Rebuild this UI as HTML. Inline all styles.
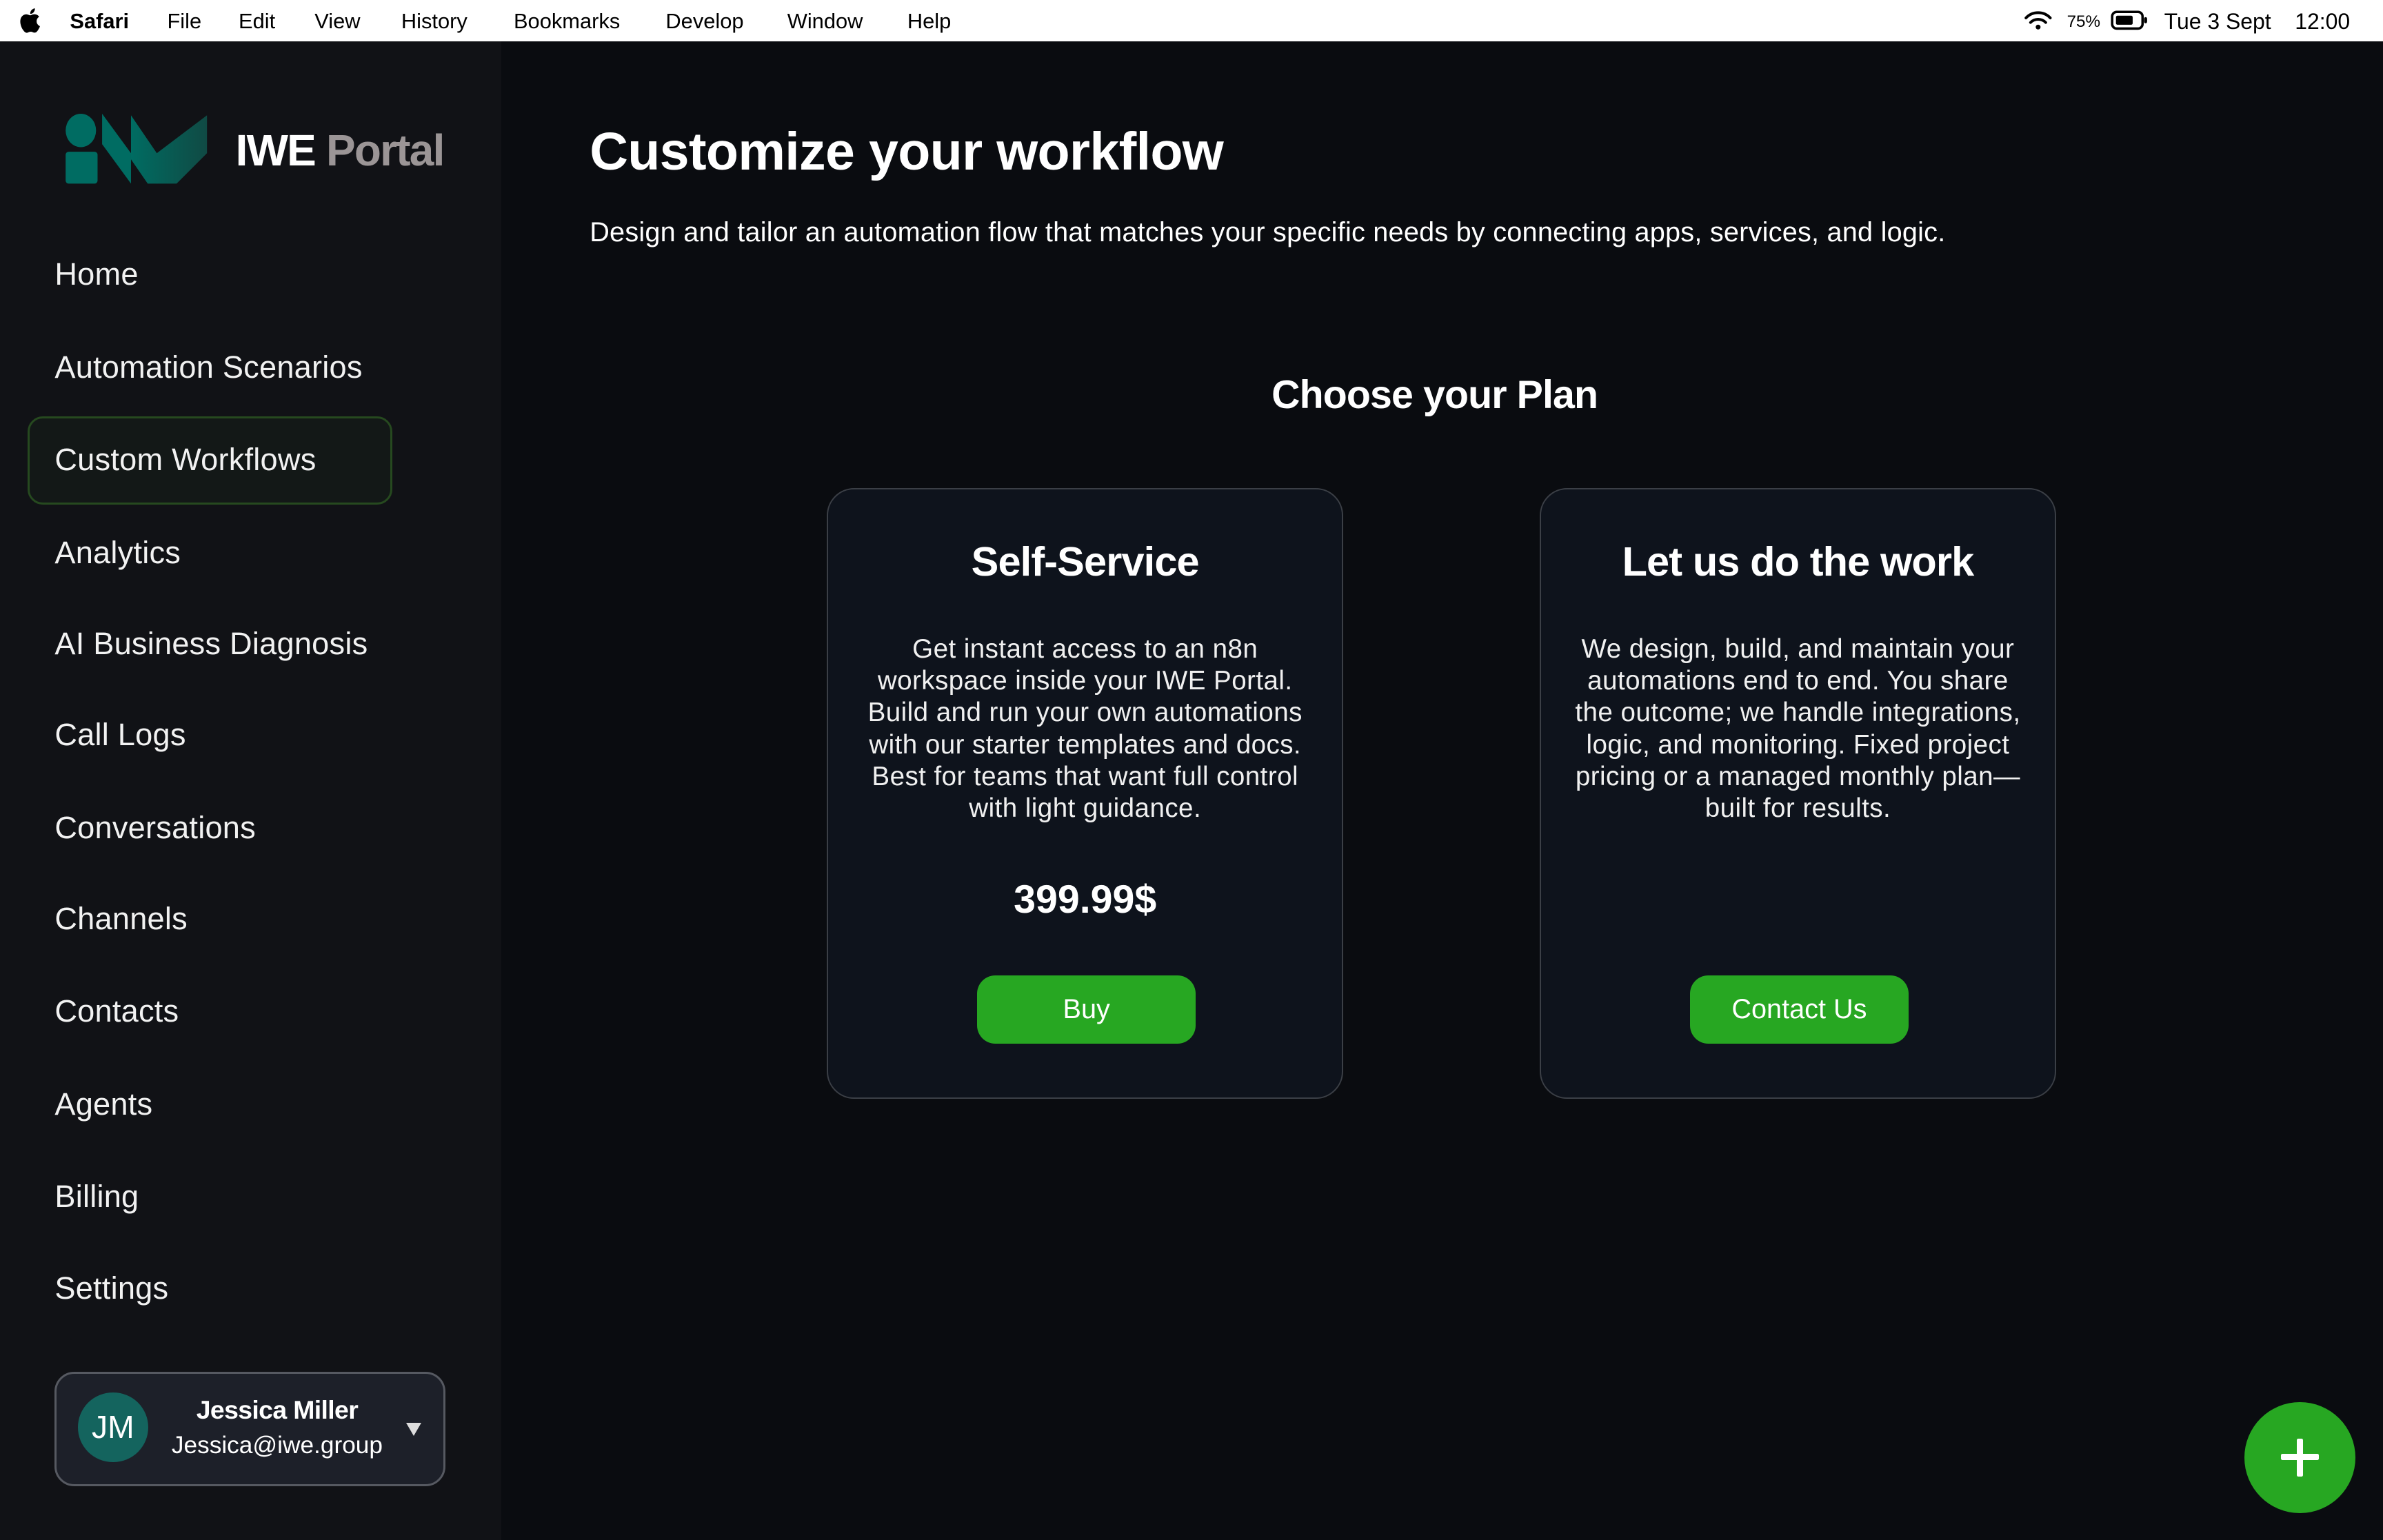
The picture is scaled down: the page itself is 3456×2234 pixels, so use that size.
<!DOCTYPE html>
<html><head><meta charset="utf-8"><style>
*{margin:0;padding:0;box-sizing:border-box}
html,body{width:3456px;height:2234px;overflow:hidden;background:#0a0c10}
#r{zoom:2.2041;width:1568px;height:1014px;position:relative;font-family:"Liberation Sans",sans-serif;color:#fff;background:#0a0c10}
.mb{position:absolute;left:0;top:0;width:1568px;height:27px;background:#fff;color:#000;font-size:14px}
.mb span{position:absolute;top:6px}
.sb{position:absolute;left:0;top:27px;width:330px;height:987px;background:#111216}
.nav{position:absolute;left:36px;font-size:20.5px;color:#f2f2f2;letter-spacing:0.1px}
.sel{position:absolute;left:18px;top:247px;width:240px;height:58px;border:1.5px solid #26491f;background:#131817;border-radius:10px}
.card{position:absolute;top:321px;width:340px;height:402px;background:#0e131c;border:1px solid #3b3f46;border-radius:18px;text-align:center}
.card h2{position:absolute;top:32px;width:100%;font-size:27px;font-weight:bold;letter-spacing:-0.4px}
.card p{position:absolute;top:95px;left:0;right:0;font-size:17.5px;line-height:21px;color:#f0f0f0;letter-spacing:0.2px;white-space:nowrap}
.btn{position:absolute;top:320px;height:45px;background:#27a722;border-radius:12px;font-size:18px;line-height:45px;text-align:center}
</style></head><body><div id="r">
<div class="mb">
<svg style="position:absolute;left:12px;top:5px" width="15" height="17" viewBox="0 0 15 17"><path d="M12.3 9c0-2 1.6-2.9 1.7-3-1-1.4-2.4-1.6-2.900-1.600-1.200-.1-2.400.7-3 .7s-1.600-.7-2.600-.7C4.100 4.400 2.900 5.200 2.200 6.400.8 8.900 1.900 12.600 3.300 14.600c.7 1 1.400 2 2.500 2 1 0 1.400-.7 2.600-.7s1.500.7 2.600.6c1.100 0 1.800-1 2.400-2 .8-1.100 1.100-2.200 1.100-2.300 0 0-2.200-.8-2.200-3.200zM10.400 3c.5-.7.900-1.600.8-2.500-.8 0-1.700.5-2.300 1.200-.5.600-.9 1.500-.8 2.400.9.1 1.800-.4 2.300-1.100z"/></svg>
<span style="left:46px;font-weight:bold">Safari</span><span style="left:110px">File</span><span style="left:157px">Edit</span><span style="left:207px">View</span><span style="left:264px">History</span><span style="left:338px">Bookmarks</span><span style="left:438px">Develop</span><span style="left:518px">Window</span><span style="left:597px">Help</span>
<svg style="position:absolute;left:1332px;top:7px" width="18" height="13" viewBox="0 0 18 13"><path d="M1 5a11 11 0 0 1 16 0M4 8a7 7 0 0 1 10 0" stroke="#000" stroke-width="1.8" fill="none" stroke-linecap="round"/><circle cx="9" cy="11" r="1.6"/></svg>
<span style="left:1360px;font-size:11px;top:8px">75%</span>
<svg style="position:absolute;left:1389px;top:7px" width="25" height="13" viewBox="0 0 25 13"><rect x="1" y="1" width="20" height="11" rx="3" stroke="#000" stroke-width="1.6" fill="none"/><rect x="3.5" y="3.5" width="11" height="6" rx="1"/><rect x="22" y="4.5" width="2" height="4" rx="1"/></svg>
<span style="left:1424px;font-size:14.5px">Tue 3 Sept</span><span style="left:1510px;font-size:14.5px">12:00</span>
</div>
<div class="sb">
<svg style="position:absolute;left:42px;top:48px" width="95" height="47" viewBox="0 0 95 47"><defs><linearGradient id="g" x1="0" x2="1"><stop offset="0" stop-color="#006c62"/><stop offset="1" stop-color="#104a44"/></linearGradient></defs><ellipse cx="11" cy="11" rx="10" ry="11" fill="#006c62"/><rect x="1" y="25" width="21" height="21" rx="2" fill="#006c62"/><path d="M25 0L44 26V46L25 20V0Z" fill="#006c62"/><path d="M44 1L61 26L94 1V26L74 46L55 46L44 30Z" fill="url(#g)"/></svg>
<div style="position:absolute;left:155px;top:55px;font-size:29px;font-weight:bold;letter-spacing:-0.8px">IWE <span style="color:#9b9596">Portal</span></div>
<div class="sel"></div>
<div class="nav" style="top:142px">Home</div>
<div class="nav" style="top:203px">Automation Scenarios</div>
<div class="nav" style="top:264px">Custom Workflows</div>
<div class="nav" style="top:325px">Analytics</div>
<div class="nav" style="top:385px">AI Business Diagnosis</div>
<div class="nav" style="top:445px">Call Logs</div>
<div class="nav" style="top:506px">Conversations</div>
<div class="nav" style="top:566px">Channels</div>
<div class="nav" style="top:627px">Contacts</div>
<div class="nav" style="top:688px">Agents</div>
<div class="nav" style="top:749px">Billing</div>
<div class="nav" style="top:809px">Settings</div>
<div style="position:absolute;left:36px;top:876px;width:257px;height:75px;background:#1d2029;border:1.5px solid #565961;border-radius:13px">
<div style="position:absolute;left:14px;top:12px;width:46px;height:46px;border-radius:50%;background:#14645e;font-size:21px;line-height:46px;text-align:center">JM</div>
<div style="position:absolute;left:70px;width:150px;top:14px;text-align:center;font-size:17px;font-weight:bold;letter-spacing:-0.3px">Jessica Miller</div>
<div style="position:absolute;left:66px;width:158px;top:38px;text-align:center;font-size:16px;letter-spacing:0px">Jessica@iwe.group</div>
<div style="position:absolute;left:230px;top:32px;width:0;height:0;border-left:5px solid transparent;border-right:5px solid transparent;border-top:9px solid #ddd"></div>
</div>
</div>
<div style="position:absolute;left:388px;top:80px;font-size:35px;font-weight:bold;letter-spacing:-0.3px">Customize your workflow</div>
<div style="position:absolute;left:388px;top:143px;font-size:18px;letter-spacing:0.1px">Design and tailor an automation flow that matches your specific needs by connecting apps, services, and logic.</div>
<div style="position:absolute;left:744px;width:400px;text-align:center;top:245px;font-size:26px;font-weight:bold;letter-spacing:-0.4px">Choose your Plan</div>
<div class="card" style="left:544px"><h2>Self-Service</h2><p>Get instant access to an n8n<br>workspace inside your IWE Portal.<br>Build and run your own automations<br>with our starter templates and docs.<br>Best for teams that want full control<br>with light guidance.</p>
<div style="position:absolute;top:255px;width:100%;font-size:26px;font-weight:bold">399.99$</div>
<div class="btn" style="left:98px;width:144px">Buy</div></div>
<div class="card" style="left:1013px"><h2>Let us do the work</h2><p>We design, build, and maintain your<br>automations end to end. You share<br>the outcome; we handle integrations,<br>logic, and monitoring. Fixed project<br>pricing or a managed monthly plan—<br>built for results.</p>
<div class="btn" style="left:98px;width:144px">Contact Us</div></div>
<div style="position:absolute;left:1477px;top:923px;width:73px;height:73px;border-radius:50%;background:#27a722">
<div style="position:absolute;left:24px;top:34px;width:25px;height:4px;background:#fff;border-radius:1px"></div>
<div style="position:absolute;left:34.5px;top:24px;width:4px;height:25px;background:#fff;border-radius:1px"></div></div>
</div></body></html>
